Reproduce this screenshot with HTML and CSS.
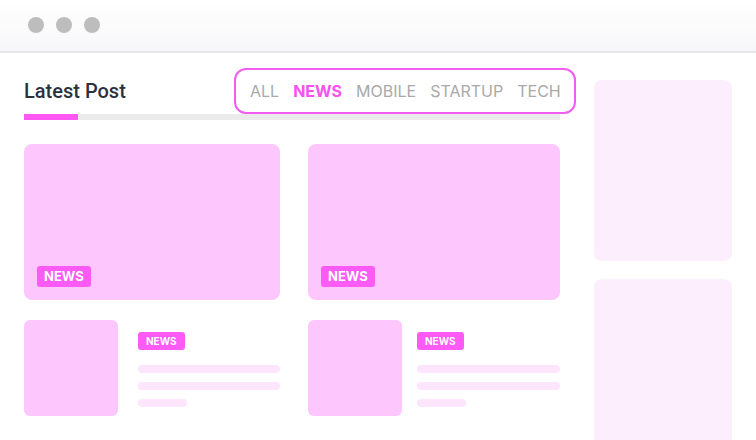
FILE: index.html
```html
<!DOCTYPE html>
<html lang="en">

<head>
    <meta charset="UTF-8">
    <meta name="viewport" content="width=device-width, initial-scale=1.0">
    <title>Latest Post</title>
    <link rel="stylesheet" href="styles.css">
</head>

<body>

    <div class="window-bar">
        <span class="dot"></span>
        <span class="dot"></span>
        <span class="dot"></span>
    </div>

    <div class="page">
        <div class="content">
            <div class="section-head">
                <h1>Latest Post</h1>
                <div class="filters">
                    <span>ALL</span>
                    <span class="active">NEWS</span>
                    <span>MOBILE</span>
                    <span>STARTUP</span>
                    <span>TECH</span>
                </div>
            </div>
            <div class="progress"><div class="progress-fill"></div></div>

            <div class="big-posts">
                <div class="big-card"><span class="badge">NEWS</span></div>
                <div class="big-card"><span class="badge">NEWS</span></div>
            </div>

            <div class="small-posts">
                <div class="small-card">
                    <div class="thumb"></div>
                    <div class="meta">
                        <span class="badge badge-sm">NEWS</span>
                        <div class="line"></div>
                        <div class="line"></div>
                        <div class="line short"></div>
                    </div>
                </div>
                <div class="small-card tight">
                    <div class="thumb"></div>
                    <div class="meta">
                        <span class="badge badge-sm">NEWS</span>
                        <div class="line"></div>
                        <div class="line"></div>
                        <div class="line short"></div>
                    </div>
                </div>
            </div>
        </div>

        <div class="sidebar">
            <div class="side-box"></div>
            <div class="side-box tall"></div>
        </div>
    </div>

</body>

</html>
```

FILE: styles.css
```css
* {
    box-sizing: border-box;
    margin: 0;
    padding: 0;
}

body {
    font-family: Roboto, "Liberation Sans", sans-serif;
    background-color: #fff;
    width: 756px;
    height: 440px;
    overflow: hidden;
}

.window-bar {
    height: 53px;
    display: flex;
    align-items: center;
    gap: 12px;
    padding: 0 0 2px 28px;
    background: linear-gradient(#fff, #f7f7f9);
    border-bottom: 2px solid #e6e6ea;
}

.dot {
    width: 16px;
    height: 16px;
    border-radius: 50%;
    background-color: #bdbdbd;
}

.page {
    display: flex;
    gap: 34px;
    padding: 0 24px;
}

.content {
    width: 536px;
    padding-top: 15px;
}

.section-head {
    display: flex;
    justify-content: space-between;
    align-items: center;
    height: 46px;
    margin-right: -16px;
}

h1 {
    font-size: 20px;
    font-weight: 500;
    color: #2b323e;
}

.filters {
    display: flex;
    align-items: center;
    gap: 14px;
    height: 46px;
    width: 342px;
    padding: 0 14px;
    border: 2px solid #f25cf0;
    border-radius: 12px;
    font-family: Inter, Roboto, sans-serif;
    font-size: 16px;
    color: #a9a9a9;
}

.filters .active {
    color: #f552ee;
    font-weight: 700;
}

.progress {
    height: 6px;
    background-color: #ebebeb;
}

.progress-fill {
    width: 54px;
    height: 100%;
    background-color: #fd57f4;
}

.big-posts {
    display: grid;
    grid-template-columns: 256px 252px;
    gap: 28px;
    margin-top: 24px;
}

.big-card {
    height: 156px;
    border-radius: 8px;
    background-color: #fdc6fd;
    display: flex;
    align-items: flex-end;
    padding: 13px;
}

.badge {
    display: inline-block;
    background-color: #fd5af6;
    color: #fff;
    font-family: Inter, Roboto, sans-serif;
    font-size: 13px;
    font-weight: 700;
    line-height: 21px;
    padding: 0 7px;
    border-radius: 3px;
}

.badge-sm {
    font-size: 10px;
    line-height: 18px;
    padding: 0 8px;
    align-self: flex-start;
    margin-bottom: 6px;
}

.small-posts {
    display: grid;
    grid-template-columns: 256px 252px;
    gap: 28px;
    margin-top: 20px;
}

.small-card {
    display: flex;
    gap: 20px;
}

.small-card.tight {
    gap: 15px;
}

.thumb {
    width: 94px;
    height: 96px;
    border-radius: 6px;
    background-color: #fdc6fd;
    flex-shrink: 0;
}

.meta {
    flex: 1;
    display: flex;
    flex-direction: column;
    gap: 9px;
    padding-top: 12px;
}

.line {
    height: 8px;
    border-radius: 4px;
    background-color: #fde6fd;
}

.line.short {
    width: 49px;
}

.sidebar {
    width: 138px;
    padding-top: 27px;
    display: flex;
    flex-direction: column;
    gap: 18px;
}

.side-box {
    height: 181px;
    border-radius: 8px;
    background-color: #fdeefd;
}

.side-box.tall {
    height: 161px;
    border-radius: 8px 8px 0 0;
}
```
